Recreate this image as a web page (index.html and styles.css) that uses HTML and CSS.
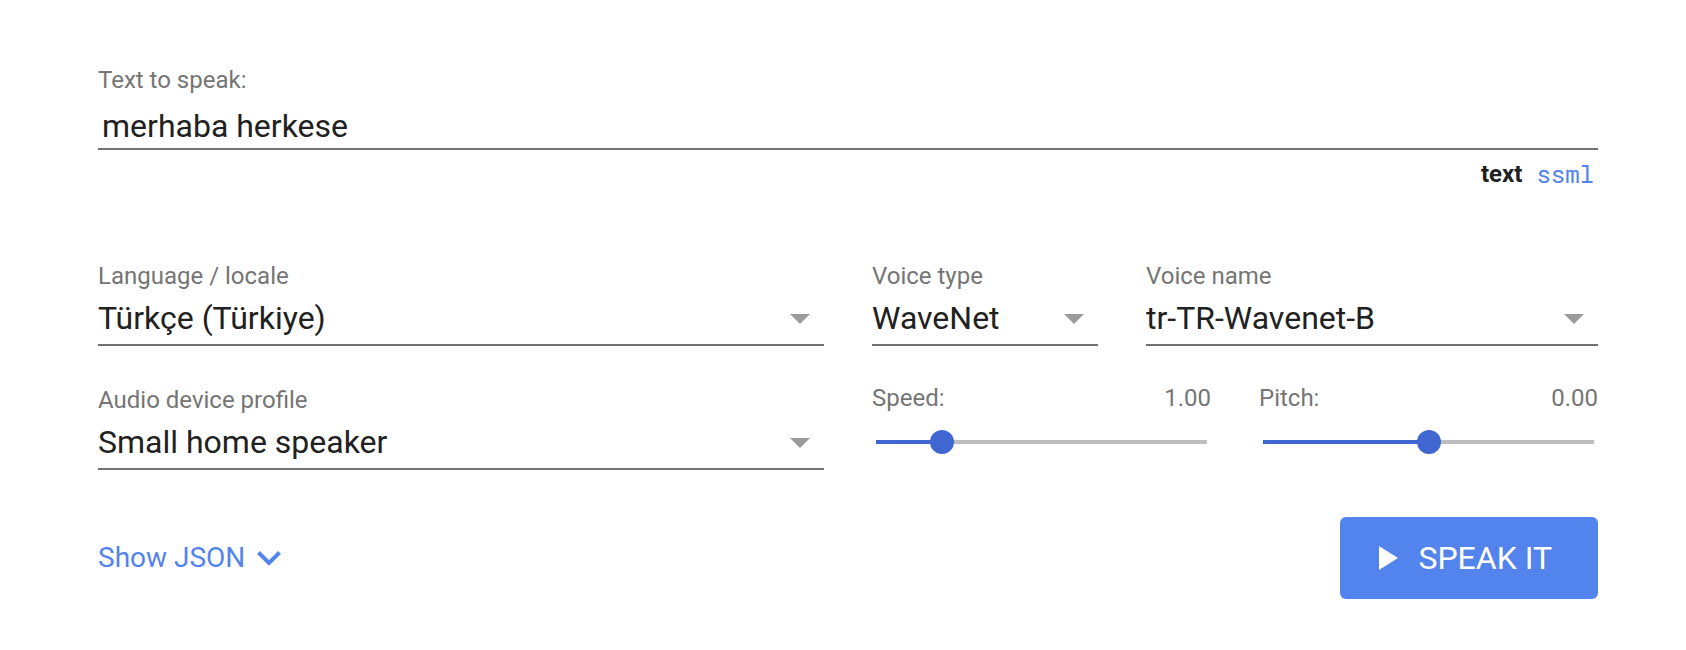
FILE: index.html
```
<!DOCTYPE html>
<html lang="en">
<head>
<meta charset="utf-8">
<meta name="viewport" content="width=device-width, initial-scale=1">
<title>Text-to-Speech</title>
<link rel="stylesheet" href="styles.css">
</head>
<body>
<form class="demo">
  <div class="text-field">
    <label class="label" for="text">Text to speak:</label>
    <input class="text-input" id="text" type="text" value="merhaba herkese">
    <div class="modes">
      <button class="mode mode-active" type="button">text</button>
      <button class="mode mode-code" type="button">ssml</button>
    </div>
  </div>

  <div class="options">
    <div class="field">
      <label class="label" for="locale">Language / locale</label>
      <div class="select-box">
        <select class="select" id="locale"><option>Türkçe (Türkiye)</option></select>
      </div>
    </div>
    <div class="voice">
      <div class="field">
        <label class="label" for="voice-type">Voice type</label>
        <div class="select-box">
          <select class="select" id="voice-type"><option>WaveNet</option></select>
        </div>
      </div>
      <div class="field">
        <label class="label" for="voice-name">Voice name</label>
        <div class="select-box">
          <select class="select" id="voice-name"><option>tr-TR-Wavenet-B</option></select>
        </div>
      </div>
    </div>
    <div class="field">
      <label class="label" for="profile">Audio device profile</label>
      <div class="select-box">
        <select class="select" id="profile"><option>Small home speaker</option></select>
      </div>
    </div>
    <div class="sliders">
      <div class="slider">
        <div class="slider-head">
          <label class="label" for="speed">Speed:</label>
          <output class="label" for="speed">1.00</output>
        </div>
        <input class="range" id="speed" type="range" min="0.25" max="4" step="0.01" value="1" style="--fill: 20%">
      </div>
      <div class="slider">
        <div class="slider-head">
          <label class="label" for="pitch">Pitch:</label>
          <output class="label" for="pitch">0.00</output>
        </div>
        <input class="range" id="pitch" type="range" min="-20" max="20" step="0.1" value="0" style="--fill: 50%">
      </div>
    </div>
  </div>

  <div class="actions">
    <button class="json-toggle" type="button">Show JSON
      <svg width="24" height="16" viewBox="0 0 24 16" aria-hidden="true"><path d="M1.5 2.5L12 13 22.500 2.500" fill="none" stroke="currentColor" stroke-width="4"/></svg>
    </button>
    <button class="speak" type="button">
      <svg width="19" height="24" viewBox="0 0 19 24" aria-hidden="true"><path d="M0 0v24l19-12z" fill="currentColor"/></svg>
      SPEAK IT
    </button>
  </div>
</form>
</body>
</html>
```
FILE: styles.css
```
* {
  box-sizing: border-box;
}

body {
  margin: 0;
  background: #fff;
  color: #212121;
  font-family: Roboto, "Liberation Sans", sans-serif;
}

button,
input,
select {
  margin: 0;
  padding: 0;
  border: 0;
  border-radius: 0;
  background: none;
  color: inherit;
  font: inherit;
}

button {
  cursor: pointer;
}

.demo {
  padding: 64px 88px 48px 98px;
}

.label {
  display: block;
  color: #757575;
  font-size: 24px;
  line-height: 32px;
}

.text-field {
  display: flex;
  flex-direction: column;
}

.text-input {
  height: 54px;
  padding: 10px 4px 2px;
  border-bottom: 2px solid #737373;
  font-size: 32px;
  line-height: 40px;
}

.modes {
  display: flex;
  justify-content: flex-end;
  gap: 14px;
  padding: 8px 4px 0;
}

.mode {
  font-size: 24px;
  line-height: 32px;
}

.mode-active {
  font-weight: 700;
}

.mode-code {
  color: #5383ec;
  font-family: "Roboto Mono", "Liberation Mono", monospace;
}

.options {
  display: grid;
  grid-template-columns: 1fr 1fr;
  gap: 36px 48px;
  align-items: end;
  margin-top: 70px;
}

.voice {
  display: grid;
  grid-template-columns: 1fr 2fr;
  gap: 48px;
}

.field {
  display: flex;
  flex-direction: column;
  gap: 6px;
}

.select-box {
  position: relative;
}

.select-box::after {
  content: "";
  position: absolute;
  top: 16px;
  right: 14px;
  border: 10px solid transparent;
  border-top-color: #9b9b9b;
  border-bottom: 0;
  pointer-events: none;
}

.select {
  display: block;
  appearance: none;
  width: 100%;
  height: 48px;
  padding-bottom: 6px;
  border-bottom: 2px solid #737373;
  font-size: 32px;
  line-height: 40px;
}

.sliders {
  display: grid;
  grid-template-columns: 1fr 1fr;
  gap: 48px;
}

.slider-head {
  display: flex;
  justify-content: space-between;
}

.range {
  display: block;
  appearance: none;
  width: calc(100% + 16px);
  height: 56px;
  margin: 0 -8px;
  background: linear-gradient(to right, #4067d1 var(--fill), #bdbdbd var(--fill)) center / calc(100% - 24px) 4px no-repeat;
}

.range::-webkit-slider-thumb {
  appearance: none;
  width: 24px;
  height: 24px;
  border-radius: 50%;
  background: #4067d1;
}

.actions {
  display: flex;
  justify-content: space-between;
  align-items: center;
  margin-top: 47px;
}

.json-toggle {
  display: flex;
  align-items: center;
  gap: 12px;
  color: #5383ec;
  font-size: 28px;
  line-height: 40px;
}

.speak {
  display: flex;
  align-items: center;
  gap: 20px;
  padding: 21px 46px 21px 39px;
  border-radius: 6px;
  background: #5383ec;
  color: #fff;
  font-size: 32px;
  line-height: 40px;
}
```
